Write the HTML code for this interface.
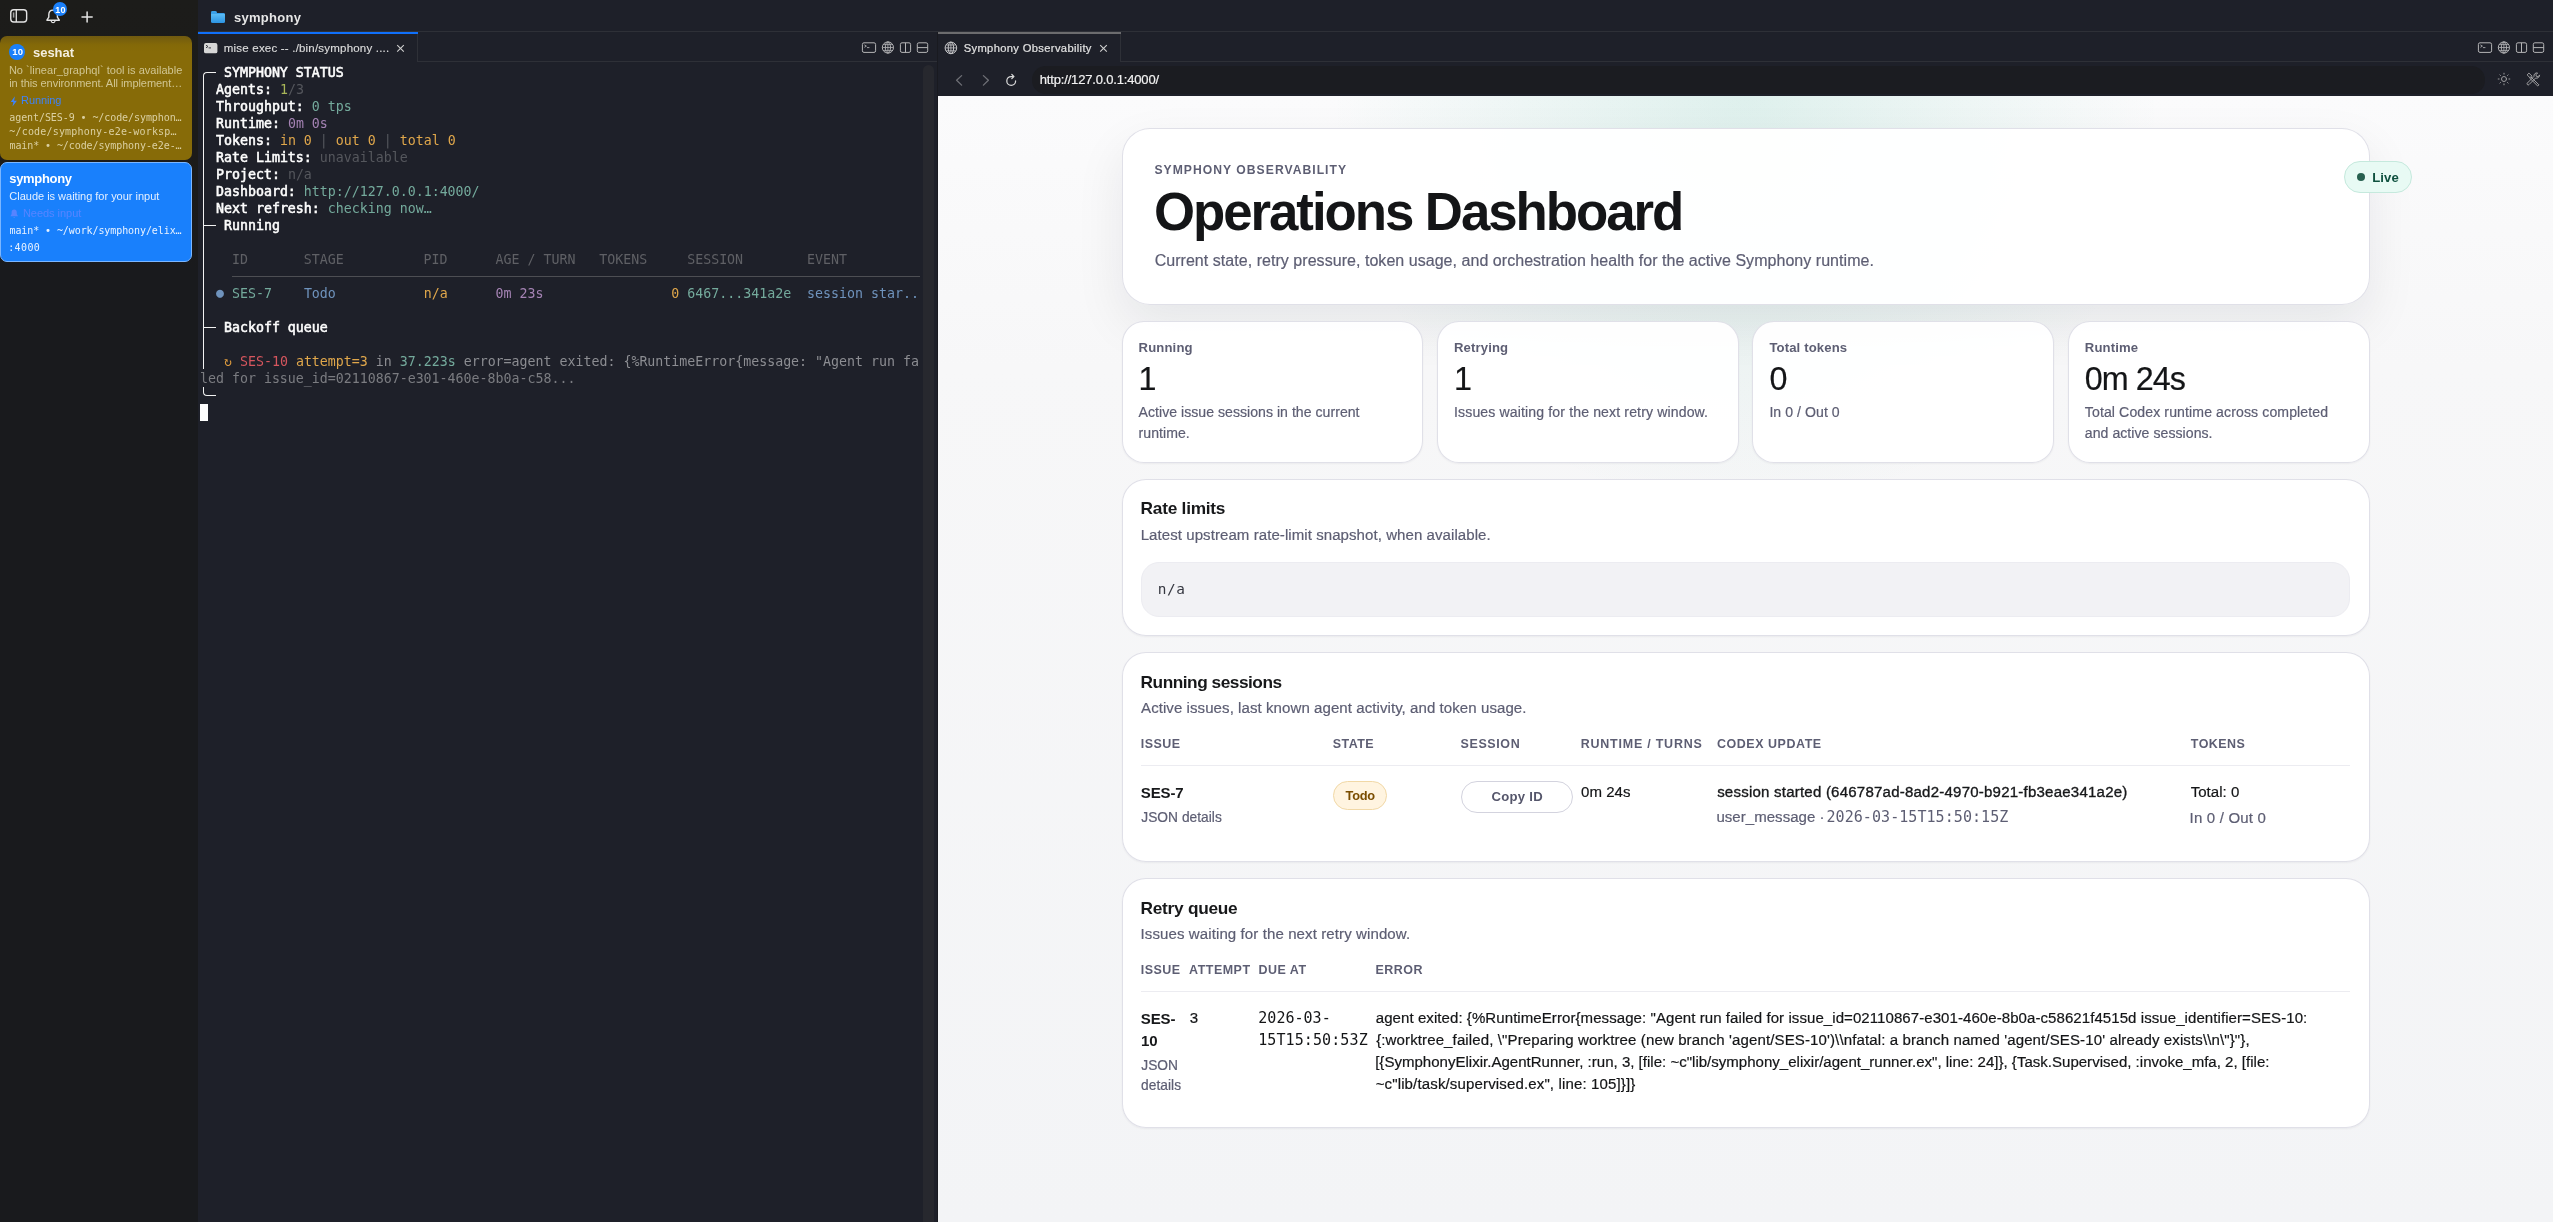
<!DOCTYPE html>
<html lang="en">
<head>
<meta charset="utf-8">
<title>Symphony Observability</title>
<style>
*{box-sizing:border-box}
html,body{margin:0;padding:0}
body{width:2553px;height:1222px;overflow:hidden;position:relative;background:#1e2029;font-family:"Liberation Sans",sans-serif}
#root{position:absolute;left:0;top:0;width:2553px;height:1222px;overflow:hidden;will-change:transform}
.a{position:absolute}
.t{position:absolute;white-space:pre}
svg{position:absolute;overflow:visible}
/* sidebar */
#sidebar{left:0;top:0;width:198px;height:1222px;background:linear-gradient(180deg,#1c1c1a 0,#1c1b19 150px,#191a1d 270px,#191a1d 100%)}
#c1{left:0;top:36px;width:192px;height:123.6px;border-radius:7px;background:linear-gradient(180deg,#705a10 0,#846908 9px,#876b08 16px,#876b08 100%)}
#c2{left:0;top:161.8px;width:192px;height:100.2px;border-radius:7px;background:#1980fc;border:1.6px solid #7bb6ff}
/* terminal */
#term{left:198px;top:0;width:740px;height:1222px;background:#1e2029}
.ln{background:#2e3037}
.tl{position:absolute;left:200px;height:17px;line-height:17px;white-space:pre;font-family:"DejaVu Sans Mono","Liberation Mono",monospace;font-size:13.288px;color:#fff}
.tl b{font-weight:normal;color:#fdfdfd;-webkit-text-stroke:0.55px #fdfdfd}
.g{color:#a9b658}.d{color:#55575d}.c{color:#74aa9c}.p{color:#a583b4}.y{color:#e0a74b}.bl{color:#6f93bd}.r{color:#d6565e}.h{color:#5f6065}.e{color:#8c8d92}.o{color:#dd9a3e}.w2{color:#7b7c81}
.bx{position:absolute;border-color:#f2f2f2;border-style:solid;border-width:0}
/* browser page */
#page{left:938px;top:96px;width:1615px;height:1126px;overflow:hidden;
 background:radial-gradient(circle at top,rgba(16,163,127,.12) 0%,rgba(16,163,127,0) 30%),linear-gradient(180deg,#fbfbfc 0%,#f7f7f8 24%,#f3f4f6 100%)}
.card{position:absolute;background:rgba(255,255,255,.94);border:1px solid rgba(217,217,227,.82);box-shadow:0 1px 2px rgba(16,24,40,.05)}
.hero{border-radius:28px;box-shadow:0 20px 50px rgba(15,23,42,.08)}
.metric{border-radius:22px}
.section{border-radius:24px}
.rule{position:absolute;height:1px;background:#ececf1}
</style>
</head>
<body>
<div id="root">
<!-- ================= SIDEBAR ================= -->
<div class="a" id="sidebar"></div>
<div class="a" id="c1"></div>
<div class="a" id="c2"></div>
<!-- sidebar toggle -->
<svg style="left:9px;top:8px" width="20" height="17" viewBox="0 0 20 17"><rect x="1.75" y="1.75" width="15.9" height="12.3" rx="3" fill="none" stroke="#e4e4e4" stroke-width="1.4"/><line x1="7.3" y1="2" x2="7.3" y2="14" stroke="#e4e4e4" stroke-width="1.3"/><line x1="4.6" y1="4.4" x2="4.6" y2="9.6" stroke="#a0a0a0" stroke-width="1.5"/></svg>
<!-- bell -->
<svg style="left:45px;top:8px" width="17" height="17" viewBox="0 0 17 17"><path d="M8.1 2.1c-2.9 0-4.3 2.2-4.3 4.7v2.4L1.9 12.2h12.4l-1.9-3V6.8c0-2.5-1.4-4.7-4.3-4.7z" fill="none" stroke="#e4e4e4" stroke-width="1.4" stroke-linejoin="round"/><path d="M6.3 13.4a1.9 1.9 0 0 0 3.6 0" fill="none" stroke="#e4e4e4" stroke-width="1.3" stroke-linecap="round"/></svg>
<div class="a" style="left:52.8px;top:2px;width:14.2px;height:14.2px;border-radius:50%;background:#1a80fb"></div>
<!-- plus -->
<svg style="left:80px;top:10px" width="14" height="14" viewBox="0 0 14 14"><path d="M7.1 1.9v10.2M2 7h10.2" stroke="#e4e4e4" stroke-width="1.5" stroke-linecap="round" fill="none"/></svg>
<!-- card1 badge -->
<div class="a" style="left:9px;top:44.1px;width:15.8px;height:15.8px;border-radius:50%;background:#1a80fb"></div>
<!-- lightning -->
<svg style="left:9.5px;top:95.5px" width="8" height="11" viewBox="0 0 8 11"><path d="M4.9 0.3 0.7 6h2.7l-0.9 4.6L6.9 4.7H4.1z" fill="#3f83f8"/></svg>
<!-- small bell -->
<svg style="left:9.6px;top:208.6px" width="9" height="10" viewBox="0 0 9 10"><path d="M4.2 0.6c-1.7 0-2.6 1.3-2.6 2.8v1.7L0.4 7.2h7.6L6.8 5.1V3.4c0-1.5-.9-2.8-2.6-2.8zM3.2 8a1.05 1.05 0 0 0 2 0z" fill="#5784ff"/></svg>

<!-- ================= TERMINAL PANE ================= -->
<div class="a" id="term"></div>
<!-- folder -->
<div class="a" style="left:210.8px;top:11.1px;width:6.6px;height:4px;border-radius:1.4px 1.6px 0 0;background:#3aa0e8"></div>
<div class="a" style="left:210.8px;top:12.6px;width:14.3px;height:3px;border-radius:1.3px 1.4px 0 0;background:#3aa0e8"></div>
<div class="a" style="left:210.8px;top:14.2px;width:14.3px;height:8.9px;border-radius:0.6px 0.6px 1.5px 1.5px;background:linear-gradient(180deg,#5bbcf5,#2c93e2)"></div>
<!-- chrome lines -->
<div class="a ln" style="left:198px;top:31px;width:2355px;height:1px"></div>
<div class="a ln" style="left:418px;top:61px;width:520px;height:1px"></div>
<div class="a ln" style="left:1121px;top:61px;width:1432px;height:1px"></div>
<div class="a ln" style="left:417px;top:32px;width:1px;height:30px"></div>
<div class="a ln" style="left:1120px;top:32px;width:1px;height:30px"></div>
<div class="a" style="left:198px;top:32px;width:220px;height:2px;background:#1070fb"></div>
<div class="a" style="left:938px;top:32px;width:183px;height:2px;background:#6c6c6e"></div>
<div class="a" style="left:937px;top:32px;width:1px;height:1190px;background:#191a20"></div>
<!-- tab 1 icon -->
<svg style="left:203.8px;top:42.6px" width="14" height="11" viewBox="0 0 14 11"><rect x="0" y="0" width="13.4" height="10.3" rx="1.9" fill="#d6d6d6"/><path d="M2 2.2l2 1.3-2 1.3" fill="none" stroke="#2a2c33" stroke-width=".9"/><path d="M4.6 4.9h2.4" stroke="#2a2c33" stroke-width=".9"/></svg>
<svg style="left:396px;top:44px" width="9" height="9" viewBox="0 0 9 9"><path d="M1.2 1.1l6.6 6.6M7.8 1.1L1.2 7.7" stroke="#cfcfcf" stroke-width="1.1" fill="none"/></svg>
<!-- pane icons (terminal) -->
<svg style="left:861px;top:41px" width="70" height="14" viewBox="0 0 70 14"><g fill="none" stroke="#b4b4b6" stroke-width="1"><rect x="1.4" y="1.8" width="13.2" height="9.6" rx="1.6"/><path d="M3.4 3.9l2 1.2-2 1.2M6 6.6h2.4" stroke-width=".85"/><circle cx="26.9" cy="6.5" r="5.6"/><ellipse cx="26.9" cy="6.5" rx="2.6" ry="5.6"/><path d="M21.3 6.5h11.2M26.9 0.9v11.2M22.2 3.6h9.4M22.2 9.4h9.4" stroke-width=".8"/><rect x="39.4" y="1.8" width="10.2" height="9.6" rx="1.6"/><path d="M44.5 1.8v9.6"/><rect x="56.3" y="1.8" width="10.4" height="9.6" rx="1.6"/><path d="M56.3 6.6h10.4"/></g></svg>
<!-- scrollbar track -->
<div class="a" style="left:923px;top:65px;width:11px;height:1170px;border-radius:5.5px;background:#27282e"></div>
<!-- box drawing -->
<div class="bx" style="left:203px;top:72px;width:13px;height:297px;border-left-width:1px;border-top-width:1px;border-top-left-radius:4px"></div>
<div class="bx" style="left:204px;top:225px;width:12px;border-top-width:1px"></div>
<div class="bx" style="left:204px;top:327px;width:12px;border-top-width:1px"></div>
<div class="bx" style="left:203px;top:387px;width:13px;height:9px;border-left-width:1px;border-bottom-width:1px;border-bottom-left-radius:4px"></div>
<div class="a" style="left:232px;top:276px;width:688px;height:1px;background:#4d4e53"></div>
<div class="a" style="left:200px;top:404px;width:8px;height:17px;background:#fdfdfd"></div>
<!-- terminal text -->
<div class="tl" style="top:64px">   <b>SYMPHONY STATUS</b></div>
<div class="tl" style="top:81px">  <b>Agents:</b> <span class="g">1</span><span class="d">/3</span></div>
<div class="tl" style="top:98px">  <b>Throughput:</b> <span class="c">0 tps</span></div>
<div class="tl" style="top:115px">  <b>Runtime:</b> <span class="p">0m 0s</span></div>
<div class="tl" style="top:132px">  <b>Tokens:</b> <span class="y">in 0</span> <span class="d">|</span> <span class="y">out 0</span> <span class="d">|</span> <span class="y">total 0</span></div>
<div class="tl" style="top:149px">  <b>Rate Limits:</b> <span class="d">unavailable</span></div>
<div class="tl" style="top:166px">  <b>Project:</b> <span class="d">n/a</span></div>
<div class="tl" style="top:183px">  <b>Dashboard:</b> <span class="c">http://127.0.0.1:4000/</span></div>
<div class="tl" style="top:200px">  <b>Next refresh:</b> <span class="c">checking now…</span></div>
<div class="tl" style="top:217px">   <b>Running</b></div>
<div class="tl h" style="top:251px">    ID       STAGE          PID      AGE / TURN   TOKENS     SESSION        EVENT</div>
<div class="tl" style="top:285px">  <span class="bl" style="position:relative;top:-1.2px">●</span> <span class="c">SES-7</span>    <span class="bl">Todo</span>           <span class="y">n/a</span>      <span class="p">0m 23s</span>                <span class="y">0</span> <span class="c">6467...341a2e</span>  <span class="bl">session star..</span></div>
<div class="tl" style="top:319px">   <b>Backoff queue</b></div>
<div class="tl" style="top:353px">   <span class="o">↻</span> <span class="r">SES-10</span> <span class="y">attempt=3</span> <span class="e">in</span> <span class="c">37.223s</span> <span class="e">error=agent exited: {%RuntimeError{message: "Agent run fa</span></div>
<div class="tl w2" style="top:370px">led for issue_id=02110867-e301-460e-8b0a-c58...</div>

<!-- ================= BROWSER PANE ================= -->
<!-- tab 2 -->
<svg style="left:944px;top:41.3px" width="14" height="14" viewBox="0 0 14 14"><g fill="none" stroke="#c8c8ca" stroke-width="1"><circle cx="6.9" cy="6.9" r="5.8"/><ellipse cx="6.9" cy="6.9" rx="2.7" ry="5.8"/><path d="M1.1 6.9h11.6M6.9 1.1v11.6M2.1 4h9.6M2.1 9.8h9.6" stroke-width=".8"/></g></svg>
<svg style="left:1099.3px;top:44.3px" width="9" height="9" viewBox="0 0 9 9"><path d="M1.2 1.1l6.6 6.6M7.8 1.1L1.2 7.7" stroke="#cfcfcf" stroke-width="1.1" fill="none"/></svg>
<svg style="left:2477.2px;top:41px" width="70" height="14" viewBox="0 0 70 14"><g fill="none" stroke="#b4b4b6" stroke-width="1"><rect x="1.4" y="1.8" width="13.2" height="9.6" rx="1.6"/><path d="M3.4 3.9l2 1.2-2 1.2M6 6.6h2.4" stroke-width=".85"/><circle cx="26.9" cy="6.5" r="5.6"/><ellipse cx="26.9" cy="6.5" rx="2.6" ry="5.6"/><path d="M21.3 6.5h11.2M26.9 0.9v11.2M22.2 3.6h9.4M22.2 9.4h9.4" stroke-width=".8"/><rect x="39.4" y="1.8" width="10.2" height="9.6" rx="1.6"/><path d="M44.5 1.8v9.6"/><rect x="56.3" y="1.8" width="10.4" height="9.6" rx="1.6"/><path d="M56.3 6.6h10.4"/></g></svg>
<!-- url bar -->
<div class="a" style="left:1032px;top:66.4px;width:1453.3px;height:27.6px;border-radius:13.8px;background:#1b1c21"></div>
<svg style="left:952px;top:73px" width="70" height="16" viewBox="0 0 70 16"><g fill="none" stroke-linecap="round" stroke-linejoin="round"><path d="M9.6 2.6L4.6 7.3l5 4.8" stroke="#6f7076" stroke-width="1.3"/><path d="M31.4 2.6l5 4.7-5 4.8" stroke="#6f7076" stroke-width="1.3"/><path d="M63.6 7.9a4.4 4.4 0 1 1-4.4-4.4h2.4" stroke="#dadada" stroke-width="1.25"/><path d="M59.8 1.4l2 2.1-2 2.1" stroke="#dadada" stroke-width="1.25"/></g></svg>
<!-- sun -->
<svg style="left:2496px;top:71px" width="16" height="16" viewBox="0 0 16 16"><g fill="none" stroke="#9c9c9e" stroke-width="1" stroke-linecap="round"><circle cx="8" cy="8" r="2.5"/><path d="M8 2.2v.9M8 12.9v.9M2.2 8h.9M12.9 8h.9M3.9 3.9l.6.6M11.5 11.5l.6.6M3.9 12.1l.6-.6M11.5 4.5l.6-.6"/></g></svg>
<!-- tools -->
<svg style="left:2526px;top:72px" width="15" height="15" viewBox="0 0 15 15"><g fill="none" stroke="#a2a2a4" stroke-width="1" stroke-linecap="round" stroke-linejoin="round"><path d="M1.4 2.6l1.5-1.5 3.2 3.1-1.5 1.6z"/><path d="M4.9 4.9l8 7.9-1.2 1.2-8-7.9"/><path d="M13.6 3.3a2.9 2.9 0 0 1-4 2.7L3 12.6a1.1 1.1 0 0 1-1.6-1.6L8 4.4a2.9 2.9 0 0 1 3.6-3.4L9.9 2.8l.4 1.5 1.5.4z"/></g></svg>
<!-- page -->
<div class="a" id="page"></div>
<div class="card hero" style="left:1122px;top:128px;width:1248px;height:177px"></div>
<div class="a" style="left:2344px;top:161px;width:68px;height:32px;border-radius:16px;background:#e8faf4;border:1px solid #c5e9dd"></div>
<div class="a" style="left:2357px;top:172.9px;width:8.2px;height:8.2px;border-radius:50%;background:#27604f"></div>
<div class="card metric" style="left:1122px;top:321px;width:301px;height:142px"></div>
<div class="card metric" style="left:1437px;top:321px;width:302px;height:142px"></div>
<div class="card metric" style="left:1752px;top:321px;width:302px;height:142px"></div>
<div class="card metric" style="left:2068px;top:321px;width:302px;height:142px"></div>
<div class="card section" style="left:1122px;top:479px;width:1248px;height:157px"></div>
<div class="a" style="left:1141px;top:562px;width:1209px;height:55px;border-radius:18px;background:#f2f2f5;border:1px solid #ececf1"></div>
<div class="card section" style="left:1122px;top:652px;width:1248px;height:210px"></div>
<div class="rule" style="left:1141px;top:765px;width:1209px"></div>
<div class="a" style="left:1333px;top:781px;width:54px;height:29px;border-radius:15px;background:#fff4e0;border:1px solid #f1d8a6"></div>
<div class="a" style="left:1461px;top:781px;width:112px;height:32px;border-radius:16px;background:#fff;border:1px solid #d3d3de"></div>
<div class="card section" style="left:1122px;top:878px;width:1248px;height:250px"></div>
<div class="rule" style="left:1141px;top:991px;width:1209px"></div>
<span class="t" style="left:233.94px;top:9.00px;line-height:18px;font-size:13px;color:#e6e6e6;font-weight:bold;letter-spacing:0.287px;">symphony</span>
<span class="t" style="left:223.84px;top:40.00px;line-height:16px;font-size:11.5px;color:#dcdcdc;letter-spacing:0.199px;-webkit-text-stroke:0.15px #dcdcdc;">mise exec -- ./bin/symphony ....</span>
<span class="t" style="left:963.72px;top:40.00px;line-height:16px;font-size:11.2px;color:#e2e2e2;letter-spacing:0.339px;-webkit-text-stroke:0.2px #e2e2e2;">Symphony Observability</span>
<span class="t" style="left:1039.80px;top:71.00px;line-height:18px;font-size:13px;color:#f2f2f2;letter-spacing:-0.172px;-webkit-text-stroke:0.2px #f2f2f2;">http://127.0.0.1:4000/</span>
<span class="t" style="left:55.22px;top:4.00px;line-height:13px;font-size:9px;color:#fff;font-weight:bold;letter-spacing:0.205px;">10</span>
<span class="t" style="left:12.28px;top:45.00px;line-height:13px;font-size:9.5px;color:#fff;font-weight:bold;letter-spacing:0.120px;">10</span>
<span class="t" style="left:33.04px;top:44.00px;line-height:18px;font-size:13px;color:#f4efe0;font-weight:bold;letter-spacing:-0.046px;">seshat</span>
<span class="t" style="left:8.90px;top:63.00px;line-height:15px;font-size:11px;color:#d1c693;letter-spacing:0.028px;">No `linear_graphql` tool is available</span>
<span class="t" style="left:9.22px;top:76.00px;line-height:15px;font-size:11px;color:#d1c693;letter-spacing:-0.056px;">in this environment. All implement…</span>
<span class="t" style="left:21.10px;top:93.00px;line-height:15px;font-size:11px;color:#3f83f8;letter-spacing:-0.117px;">Running</span>
<span class="t" style="left:9.25px;top:111.00px;line-height:14px;font-size:10px;color:#dbd0a2;font-family:'DejaVu Sans Mono','Liberation Mono',monospace;letter-spacing:-0.080px;">agent/SES-9 • ~/code/symphon…</span>
<span class="t" style="left:9.31px;top:125.00px;line-height:14px;font-size:10px;color:#dbd0a2;font-family:'DejaVu Sans Mono','Liberation Mono',monospace;letter-spacing:0.180px;">~/code/symphony-e2e-worksp…</span>
<span class="t" style="left:9.46px;top:139.00px;line-height:14px;font-size:10px;color:#dbd0a2;font-family:'DejaVu Sans Mono','Liberation Mono',monospace;letter-spacing:-0.088px;">main* • ~/code/symphony-e2e-…</span>
<span class="t" style="left:9.24px;top:170.00px;line-height:18px;font-size:13px;color:#fff;font-weight:bold;letter-spacing:-0.313px;">symphony</span>
<span class="t" style="left:9.36px;top:189.00px;line-height:15px;font-size:11px;color:#e4efff;letter-spacing:-0.015px;">Claude is waiting for your input</span>
<span class="t" style="left:22.90px;top:206.00px;line-height:15px;font-size:11px;color:#5784ff;letter-spacing:-0.024px;">Needs input</span>
<span class="t" style="left:9.46px;top:224.00px;line-height:14px;font-size:10px;color:#e9f2ff;font-family:'DejaVu Sans Mono','Liberation Mono',monospace;letter-spacing:-0.088px;">main* • ~/work/symphony/elix…</span>
<span class="t" style="left:8.22px;top:241.00px;line-height:14px;font-size:10px;color:#e9f2ff;font-family:'DejaVu Sans Mono','Liberation Mono',monospace;letter-spacing:0.375px;">:4000</span>
<span class="t" style="left:1154.45px;top:162.00px;line-height:17px;font-size:12.16px;color:#5d5e73;font-weight:bold;letter-spacing:1.020px;">SYMPHONY OBSERVABILITY</span>
<span class="t" style="left:1154.04px;top:175.00px;line-height:74px;font-size:52.8px;color:#141517;font-weight:bold;letter-spacing:-2.052px;">Operations Dashboard</span>
<span class="t" style="left:1154.67px;top:250.00px;line-height:22px;font-size:16px;color:#5d5e73;letter-spacing:0.042px;-webkit-text-stroke:0.2px;">Current state, retry pressure, token usage, and orchestration health for the active Symphony runtime.</span>
<span class="t" style="left:2372.20px;top:169.00px;line-height:18px;font-size:13.12px;color:#0f513f;font-weight:bold;letter-spacing:0.137px;">Live</span>
<span class="t" style="left:1138.60px;top:339.00px;line-height:18px;font-size:13.12px;color:#5d5e73;font-weight:bold;letter-spacing:0.130px;">Running</span>
<span class="t" style="left:1138.60px;top:357.00px;line-height:45px;font-size:32.3px;color:#141517;letter-spacing:-0.970px;-webkit-text-stroke:0.2px;">1</span>
<span class="t" style="left:1138.60px;top:402.00px;line-height:20px;font-size:14.08px;color:#5d5e73;letter-spacing:0.030px;-webkit-text-stroke:0.2px;">Active issue sessions in the current</span>
<span class="t" style="left:1138.60px;top:423.00px;line-height:20px;font-size:14.08px;color:#5d5e73;letter-spacing:0.030px;-webkit-text-stroke:0.2px;">runtime.</span>
<span class="t" style="left:1454.00px;top:339.00px;line-height:18px;font-size:13.12px;color:#5d5e73;font-weight:bold;letter-spacing:0.130px;">Retrying</span>
<span class="t" style="left:1454.00px;top:357.00px;line-height:45px;font-size:32.3px;color:#141517;letter-spacing:-0.970px;-webkit-text-stroke:0.2px;">1</span>
<span class="t" style="left:1454.00px;top:402.00px;line-height:20px;font-size:14.08px;color:#5d5e73;letter-spacing:0.130px;-webkit-text-stroke:0.2px;">Issues waiting for the next retry window.</span>
<span class="t" style="left:1769.40px;top:339.00px;line-height:18px;font-size:13.12px;color:#5d5e73;font-weight:bold;letter-spacing:0.130px;">Total tokens</span>
<span class="t" style="left:1769.40px;top:357.00px;line-height:45px;font-size:32.3px;color:#141517;letter-spacing:-0.970px;-webkit-text-stroke:0.2px;">0</span>
<span class="t" style="left:1769.40px;top:402.00px;line-height:20px;font-size:14.08px;color:#5d5e73;letter-spacing:0.060px;-webkit-text-stroke:0.2px;">In 0 / Out 0</span>
<span class="t" style="left:2084.80px;top:339.00px;line-height:18px;font-size:13.12px;color:#5d5e73;font-weight:bold;letter-spacing:0.130px;">Runtime</span>
<span class="t" style="left:2084.80px;top:357.00px;line-height:45px;font-size:32.3px;color:#141517;letter-spacing:-0.970px;-webkit-text-stroke:0.2px;">0m 24s</span>
<span class="t" style="left:2084.80px;top:402.00px;line-height:20px;font-size:14.08px;color:#5d5e73;letter-spacing:0.110px;-webkit-text-stroke:0.2px;">Total Codex runtime across completed</span>
<span class="t" style="left:2084.80px;top:423.00px;line-height:20px;font-size:14.08px;color:#5d5e73;letter-spacing:0.050px;-webkit-text-stroke:0.2px;">and active sessions.</span>
<span class="t" style="left:1140.59px;top:496.00px;line-height:24px;font-size:17.28px;color:#17181a;font-weight:bold;letter-spacing:-0.244px;">Rate limits</span>
<span class="t" style="left:1140.66px;top:524.00px;line-height:21px;font-size:15.04px;color:#5d5e73;letter-spacing:0.065px;-webkit-text-stroke:0.2px;">Latest upstream rate-limit snapshot, when available.</span>
<span class="t" style="left:1157.83px;top:579.00px;line-height:20px;font-size:14.4px;color:#353740;font-family:'DejaVu Sans Mono','Liberation Mono',monospace;letter-spacing:0.531px;">n/a</span>
<span class="t" style="left:1140.59px;top:670.00px;line-height:24px;font-size:17.28px;color:#17181a;font-weight:bold;letter-spacing:-0.482px;">Running sessions</span>
<span class="t" style="left:1141.06px;top:697.00px;line-height:21px;font-size:15.04px;color:#5d5e73;letter-spacing:0.067px;-webkit-text-stroke:0.2px;">Active issues, last known agent activity, and token usage.</span>
<span class="t" style="left:1140.70px;top:736.00px;line-height:17px;font-size:12.48px;color:#5d5e73;font-weight:bold;letter-spacing:0.500px;">ISSUE</span>
<span class="t" style="left:1332.64px;top:736.00px;line-height:17px;font-size:12.48px;color:#5d5e73;font-weight:bold;letter-spacing:0.500px;">STATE</span>
<span class="t" style="left:1460.54px;top:736.00px;line-height:17px;font-size:12.48px;color:#5d5e73;font-weight:bold;letter-spacing:0.613px;">SESSION</span>
<span class="t" style="left:1580.71px;top:736.00px;line-height:17px;font-size:12.48px;color:#5d5e73;font-weight:bold;letter-spacing:0.783px;">RUNTIME / TURNS</span>
<span class="t" style="left:1716.93px;top:736.00px;line-height:17px;font-size:12.48px;color:#5d5e73;font-weight:bold;letter-spacing:0.554px;">CODEX UPDATE</span>
<span class="t" style="left:2190.80px;top:736.00px;line-height:17px;font-size:12.48px;color:#5d5e73;font-weight:bold;letter-spacing:0.473px;">TOKENS</span>
<span class="t" style="left:1140.87px;top:782.00px;line-height:21px;font-size:15.04px;color:#17181a;font-weight:bold;letter-spacing:-0.150px;">SES-7</span>
<span class="t" style="left:1141.27px;top:808.00px;line-height:19px;font-size:13.76px;color:#5d5e73;letter-spacing:0.030px;-webkit-text-stroke:0.2px;">JSON details</span>
<span class="t" style="left:1345.50px;top:787.00px;line-height:18px;font-size:12.8px;color:#7a4d00;font-weight:bold;letter-spacing:-0.235px;">Todo</span>
<span class="t" style="left:1491.50px;top:788.00px;line-height:18px;font-size:13.12px;color:#55566b;font-weight:bold;letter-spacing:0.283px;">Copy ID</span>
<span class="t" style="left:1581.08px;top:781.00px;line-height:21px;font-size:15.04px;color:#141517;letter-spacing:0.030px;-webkit-text-stroke:0.2px;">0m 24s</span>
<span class="t" style="left:1717.15px;top:781.00px;line-height:21px;font-size:15.04px;color:#17181a;letter-spacing:0.218px;-webkit-text-stroke:0.35px #17181a;">session started (646787ad-8ad2-4970-b921-fb3eae341a2e)</span>
<span class="t" style="left:1716.40px;top:806.00px;line-height:21px;font-size:15.04px;color:#5d5e73;letter-spacing:0.030px;-webkit-text-stroke:0.2px;">user_message · </span>
<span class="t" style="left:1826.50px;top:807.00px;line-height:21px;font-size:15.04px;color:#5d5e73;font-family:'DejaVu Sans Mono','Liberation Mono',monospace;letter-spacing:0.043px;">2026-03-15T15:50:15Z</span>
<span class="t" style="left:2190.65px;top:781.00px;line-height:21px;font-size:15.04px;color:#141517;letter-spacing:0.020px;-webkit-text-stroke:0.2px;">Total: 0</span>
<span class="t" style="left:2189.60px;top:807.00px;line-height:21px;font-size:15.04px;color:#5d5e73;letter-spacing:0.172px;-webkit-text-stroke:0.2px;">In 0 / Out 0</span>
<span class="t" style="left:1140.59px;top:896.00px;line-height:24px;font-size:17.28px;color:#17181a;font-weight:bold;letter-spacing:-0.270px;">Retry queue</span>
<span class="t" style="left:1140.50px;top:923.00px;line-height:21px;font-size:15.04px;color:#5d5e73;letter-spacing:0.099px;-webkit-text-stroke:0.2px;">Issues waiting for the next retry window.</span>
<span class="t" style="left:1140.70px;top:962.00px;line-height:17px;font-size:12.48px;color:#5d5e73;font-weight:bold;letter-spacing:0.500px;">ISSUE</span>
<span class="t" style="left:1189.10px;top:962.00px;line-height:17px;font-size:12.48px;color:#5d5e73;font-weight:bold;letter-spacing:0.500px;">ATTEMPT</span>
<span class="t" style="left:1258.51px;top:962.00px;line-height:17px;font-size:12.48px;color:#5d5e73;font-weight:bold;letter-spacing:0.500px;">DUE AT</span>
<span class="t" style="left:1375.41px;top:962.00px;line-height:17px;font-size:12.48px;color:#5d5e73;font-weight:bold;letter-spacing:0.500px;">ERROR</span>
<span class="t" style="left:1140.87px;top:1008.00px;line-height:21px;font-size:15.04px;color:#17181a;font-weight:bold;letter-spacing:-0.150px;">SES-</span>
<span class="t" style="left:1141.10px;top:1030.00px;line-height:21px;font-size:15.04px;color:#17181a;font-weight:bold;letter-spacing:-0.150px;">10</span>
<span class="t" style="left:1141.27px;top:1056.00px;line-height:19px;font-size:13.76px;color:#5d5e73;letter-spacing:0.030px;-webkit-text-stroke:0.2px;">JSON</span>
<span class="t" style="left:1141.09px;top:1076.00px;line-height:19px;font-size:13.76px;color:#5d5e73;letter-spacing:0.030px;-webkit-text-stroke:0.2px;">details</span>
<span class="t" style="left:1189.63px;top:1007.00px;line-height:21px;font-size:15.04px;color:#141517;-webkit-text-stroke:0.2px;">3</span>
<span class="t" style="left:1258.30px;top:1008.00px;line-height:21px;font-size:15.04px;color:#141517;font-family:'DejaVu Sans Mono','Liberation Mono',monospace;">2026-03-</span>
<span class="t" style="left:1258.13px;top:1030.00px;line-height:21px;font-size:15.04px;color:#141517;font-family:'DejaVu Sans Mono','Liberation Mono',monospace;letter-spacing:0.089px;">15T15:50:53Z</span>
<span class="t" style="left:1375.72px;top:1007.00px;line-height:21px;font-size:15.04px;color:#141517;letter-spacing:0.063px;-webkit-text-stroke:0.2px;">agent exited: {%RuntimeError{message: "Agent run failed for issue_id=02110867-e301-460e-8b0a-c58621f4515d issue_identifier=SES-10:</span>
<span class="t" style="left:1376.16px;top:1029.00px;line-height:21px;font-size:15.04px;color:#141517;letter-spacing:0.113px;-webkit-text-stroke:0.2px;">{:worktree_failed, \"Preparing worktree (new branch 'agent/SES-10')\\nfatal: a branch named 'agent/SES-10' already exists\\n\"}"},</span>
<span class="t" style="left:1375.20px;top:1051.00px;line-height:21px;font-size:15.04px;color:#141517;letter-spacing:0.006px;-webkit-text-stroke:0.2px;">[{SymphonyElixir.AgentRunner, :run, 3, [file: ~c"lib/symphony_elixir/agent_runner.ex", line: 24]}, {Task.Supervised, :invoke_mfa, 2, [file:</span>
<span class="t" style="left:1375.63px;top:1073.00px;line-height:21px;font-size:15.04px;color:#141517;letter-spacing:0.137px;-webkit-text-stroke:0.2px;">~c"lib/task/supervised.ex", line: 105]}]}</span>
</div>
</body>
</html>
